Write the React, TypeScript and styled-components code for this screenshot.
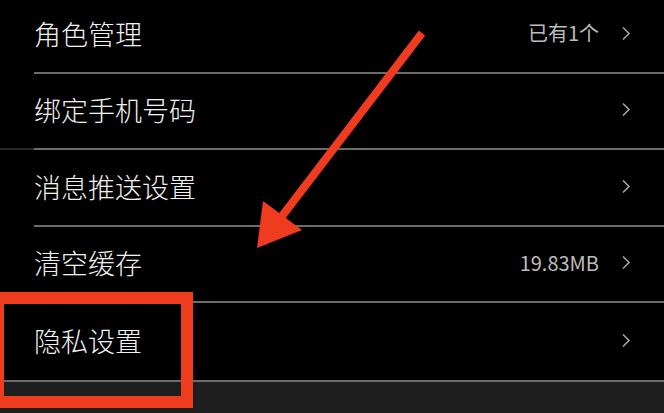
import styled, { createGlobalStyle } from "styled-components"

const GlobalStyle = createGlobalStyle`
    html, body {
        margin: 0;
        padding: 0;
        background: #000;
    }
`

const Screen = styled.div`
    position: relative;
    width: 664px;
    height: 413px;
    overflow: hidden;
    background: #000;
    font-family: "Noto Sans CJK SC", "Noto Sans", sans-serif;
`

const List = styled.ul`
    list-style: none;
    margin: -3px 0 0 0;
    padding: 0;
`

const Row = styled.li<{ $lead?: boolean }>`
    position: relative;
    height: 76.5px;
    padding-left: 34px;
    box-sizing: border-box;

    &::before {
        content: "";
        display: ${(p) => (p.$lead ? "block" : "none")};
        position: absolute;
        left: 0;
        bottom: 0;
        width: 34px;
        height: 2px;
        background: #262626;
    }
`

const RowInner = styled.div<{ $last?: boolean }>`
    height: 100%;
    box-sizing: border-box;
    padding-right: 33px;
    padding-bottom: 2px;
    display: flex;
    align-items: center;
    border-bottom: ${(p) => (p.$last ? "none" : "2px solid #6c6c6c")};
`

const Label = styled.span`
    flex: 1;
    font-size: 27px;
    font-weight: 300;
    color: #f2f2f2;
    line-height: 1;
`

const Value = styled.span`
    font-size: 20px;
    font-weight: 400;
    color: #bcbcbc;
    margin-right: 22px;
    line-height: 1;
`

const Chevron = styled.svg`
    width: 10px;
    height: 15px;
    display: block;
`

const Footer = styled.div`
    height: 32px;
    background: #1e1e1e;
    border-top: 2px solid #6c6c6c;
    border-bottom: 2px solid #5a5a5a;
`

const Highlight = styled.div`
    position: absolute;
    left: -8px;
    top: 292px;
    width: 201px;
    height: 116px;
    box-sizing: border-box;
    border: 12px solid #f03c1e;
`

const ArrowLayer = styled.svg`
    position: absolute;
    left: 0;
    top: 0;
    width: 664px;
    height: 413px;
    pointer-events: none;
`

const items = [
    { label: "角色管理", value: "已有1个" },
    { label: "绑定手机号码", lead: true },
    { label: "消息推送设置" },
    { label: "清空缓存", value: "19.83MB" },
    { label: "隐私设置", last: true },
]

function Arrow() {
    return (
        <Chevron viewBox="0 0 10 15">
            <polyline points="2,1.5 8,7.5 2,13.5" fill="none" stroke="#a4a4a4" strokeWidth="1.6" />
        </Chevron>
    )
}

export default function App() {
    return (
        <>
            <GlobalStyle />
            <Screen>
                <List>
                    {items.map((item) => (
                        <Row key={item.label} $lead={item.lead}>
                            <RowInner $last={item.last}>
                                <Label>{item.label}</Label>
                                {item.value && <Value>{item.value}</Value>}
                                <Arrow />
                            </RowInner>
                        </Row>
                    ))}
                </List>
                <Footer />
                <Highlight />
                <ArrowLayer viewBox="0 0 664 413">
                    <polygon
                        points="418.8,30.6 425.2,35.4 285.7,217.9 302,230 257,248 263,201 279.3,213.1"
                        fill="#f03c1e"
                    />
                </ArrowLayer>
            </Screen>
        </>
    )
}
